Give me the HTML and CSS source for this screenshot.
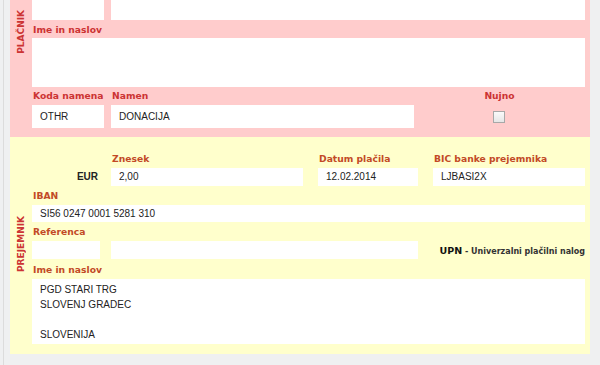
FILE: index.html
```html
<!DOCTYPE html>
<html lang="sl">
<head>
  <meta charset="UTF-8" />
  <title>UPN nalog</title>
  <link rel="stylesheet" href="styles.css">
</head>
<body>
  <div class="page">
    <form class="upn">

      <section class="part payer">
        <div class="side"><span>PLAČNIK</span></div>
        <div class="fields">
          <div class="row top-row">
            <div class="box w-code"></div>
            <div class="box grow"></div>
          </div>
          <label class="lbl">Ime in naslov</label>
          <div class="box area"></div>
          <div class="row">
            <div class="col w-code">
              <label class="lbl">Koda namena</label>
              <div class="box tall">OTHR</div>
            </div>
            <div class="col w-namen">
              <label class="lbl">Namen</label>
              <div class="box tall">DONACIJA</div>
            </div>
            <div class="col nujno">
              <label class="lbl">Nujno</label>
              <span class="check"></span>
            </div>
          </div>
        </div>
      </section>

      <section class="part payee">
        <div class="side"><span>PREJEMNIK</span></div>
        <div class="fields">
          <div class="row">
            <div class="col w-code">
              <label class="lbl">&nbsp;</label>
              <div class="cur">EUR</div>
            </div>
            <div class="col w-amount">
              <label class="lbl">Znesek</label>
              <div class="box">2,00</div>
            </div>
            <div class="col w-date">
              <label class="lbl">Datum plačila</label>
              <div class="box">12.02.2014</div>
            </div>
            <div class="col grow">
              <label class="lbl">BIC banke prejemnika</label>
              <div class="box">LJBASI2X</div>
            </div>
          </div>
          <label class="lbl">IBAN</label>
          <div class="box iban">SI56 0247 0001 5281 310</div>
          <label class="lbl">Referenca</label>
          <div class="row">
            <div class="box w-ref"></div>
            <div class="box w-refnum"></div>
            <div class="upn-name"><b>UPN</b> - Univerzalni plačilni nalog</div>
          </div>
          <label class="lbl short">Ime in naslov</label>
          <div class="box address">
            PGD STARI TRG<br>
            SLOVENJ GRADEC<br>
            <br>
            SLOVENIJA
          </div>
        </div>
      </section>

    </form>
  </div>
</body>
</html>
```

FILE: styles.css
```css
* {
  box-sizing: border-box;
}

html, body {
  margin: 0;
  padding: 0;
  background-color: #eff0f1;
  font-family: Arial, 'Liberation Sans', sans-serif;
  font-size: 10px;
  color: #222;
}

.page {
  height: 365px;
  overflow: hidden;
  border-left: 1px solid #dcdcdc;
  margin-left: 3px;
  padding-left: 6px;
}

.upn {
  width: 580px;
}

.part {
  display: flex;
}

.payer {
  background-color: #ffcccc;
  padding-bottom: 9px;
}

.payee {
  background-color: #ffffcc;
  padding-top: 12px;
  padding-bottom: 10px;
}

.side {
  width: 22px;
  display: flex;
  justify-content: center;
  align-items: flex-start;
}

.side span {
  writing-mode: vertical-rl;
  transform: rotate(180deg);
  font-family: 'DejaVu Sans', sans-serif;
  font-weight: bold;
  font-size: 9px;
  color: #cc3333;
  white-space: nowrap;
}

.payer .side span {
  margin-top: 10px;
}

.payee .side span {
  margin-top: 67px;
}

.fields {
  flex: 1;
  padding-right: 5px;
}

.row {
  display: flex;
  gap: 7px;
}

.col {
  display: flex;
  flex-direction: column;
}

.grow {
  flex: 1;
}

.lbl {
  display: block;
  font-family: 'DejaVu Sans', sans-serif;
  font-weight: bold;
  font-size: 9.2px;
  line-height: 18px;
  padding-left: 1px;
  white-space: nowrap;
  color: #cc3333;
}

.payer .top-row + .lbl {
  line-height: 16px;
  padding-top: 2px;
}

.payee .lbl {
  line-height: 19px;
  color: #c24a26;
}

.payee .lbl.short {
  line-height: 18px;
}

.box {
  background-color: #fff;
  height: 18px;
  line-height: 18px;
  padding: 0 8px;
  white-space: nowrap;
}

.box.iban {
  height: 17px;
  line-height: 17px;
}

.payer .box {
  height: 20px;
}

.payer .box.tall {
  height: 23px;
  line-height: 23px;
}

.payer .box.area {
  height: 49px;
}

.w-code { width: 72px; }
.w-namen { width: 303px; }
.w-amount { width: 192px; }
.w-date { width: 100px; margin-left: 8px; }
.w-ref { width: 68px; margin-right: 4px; }
.w-refnum { width: 307px; }

.payee .col.grow {
  margin-left: 8px;
}

.nujno {
  flex: 1;
  align-items: center;
  padding-right: 8px;
}

.check {
  display: block;
  width: 12px;
  height: 12px;
  margin-top: 6px;
  border: 1px solid #a8a8a8;
  background: linear-gradient(#fafafa, #e6e6e6);
}

.cur {
  height: 18px;
  line-height: 18px;
  text-align: right;
  padding-right: 6px;
  font-weight: bold;
}

.upn-name {
  flex: 1;
  text-align: right;
  line-height: 18px;
  font-family: 'DejaVu Sans', sans-serif;
  font-size: 8px;
  font-weight: bold;
  color: #333;
  padding-top: 1px;
}

.upn-name b {
  font-size: 9.5px;
  color: #111;
}

.box.address {
  height: 65px;
  line-height: 15px;
  padding-top: 3px;
}
```
